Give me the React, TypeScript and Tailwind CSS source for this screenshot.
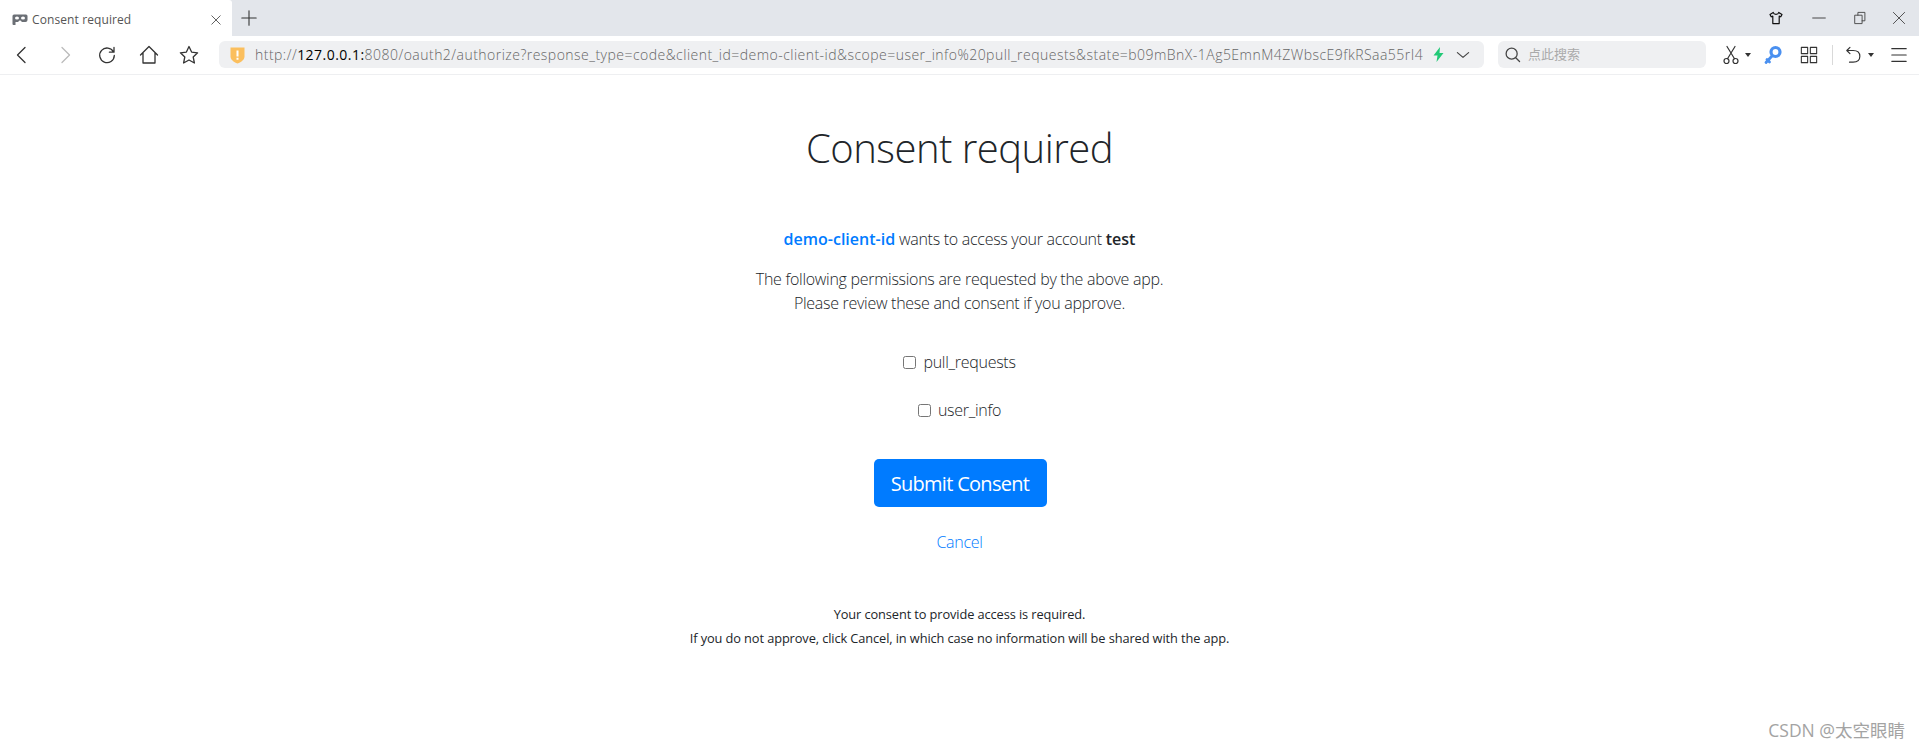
const FONT = "font-['Open_Sans','Noto_Sans_CJK_SC',sans-serif]";

function Icon({ size = 20, stroke = "#333", width = 1.3, children }: { size?: number; stroke?: string; width?: number; children: React.ReactNode }) {
  return (
    <svg width={size} height={size} viewBox="0 0 20 20" fill="none" stroke={stroke} strokeWidth={width} strokeLinecap="round" strokeLinejoin="round">
      {children}
    </svg>
  );
}

function TabBar() {
  return (
    <div className="flex h-[36px] bg-[#e3e6eb]">
      <div className="flex h-[36px] w-[232px] items-center rounded-tr-[3px] bg-white pl-[12px] pr-[10px] pt-[3px]">
        <svg width="16" height="12" viewBox="0 0 16 12" fill="#6b6f75">
          <path d="M2 0.500h12a1.500 1.500 0 0 1 1.500 1.500v4a2 2 0 0 1-2 2H10L8.500 6.500h-1L6 8H3.500v3H1.500a1 1 0 0 1-1-1V2A1.500 1.500 0 0 1 2 0.500z" />
          <ellipse cx="5" cy="4" rx="2" ry="1.500" fill="#fff" />
          <ellipse cx="11" cy="4" rx="2" ry="1.500" fill="#fff" />
        </svg>
        <span className="ml-[4px] flex-1 text-[12px] tracking-[0.1px] text-[#555]">Consent required</span>
        <Icon size={12} stroke="#444" width={1.4}><path d="M3 3l14 14M17 3L3 17" /></Icon>
      </div>
      <div className="ml-[8px] flex items-center">
        <Icon size={18} stroke="#333" width={1.2}><path d="M10 2v16M2 10h16" /></Icon>
      </div>
      <div className="ml-auto flex items-center pr-[13px]">
        <Icon size={16} stroke="#111" width={1.5}><path d="M6.500 3L2.500 5.500l1.500 3 2-.8V17h8V7.700l2 .8 1.500-3-4-2.500c-.5 2-1.500 2.500-3.500 2.500s-3-.5-3.500-2.500z" /></Icon>
        <div className="ml-[28px]"><Icon size={14} stroke="#444" width={1.4}><path d="M1 10h18" /></Icon></div>
        <div className="ml-[27px]"><Icon size={14} stroke="#444" width={1.3}><path d="M3 6h10v12H3zM7 6V2h10v12h-4" /></Icon></div>
        <div className="ml-[25px]"><Icon size={14} stroke="#444" width={1.3}><path d="M2 2l16 16M18 2L2 18" /></Icon></div>
      </div>
    </div>
  );
}

function AddressBar() {
  return (
    <div className="ml-[20px] flex h-[27px] w-[1265px] items-center rounded-[6px] bg-[#eff0f2] pl-[11px] pr-[11px]">
      <svg width="15" height="18" viewBox="0 0 15 18">
        <path d="M0.500 1.500h14v9c0 3-3 5.500-7 7-4-1.500-7-4-7-7z" fill="#fbbf5e" />
        <path d="M6.500 4.500h2v6h-2zM6.500 11.800h2v2h-2z" fill="#fff" />
      </svg>
      <div className="ml-[10px] w-[1168px] overflow-hidden whitespace-nowrap text-[14px] font-light tracking-[0.47px] text-[#666]">
        http://<span className="font-normal text-black">127.0.0.1:</span>8080/oauth2/authorize?response_type=code&amp;client_id=demo-client-id&amp;scope=user_info%20pull_requests&amp;state=b09mBnX-1Ag5EmnM4ZWbscE9fkRSaa55rI4
      </div>
      <svg className="ml-[10px]" width="11" height="15" viewBox="0 0 11 15" fill="#22c977">
        <path d="M7 0L0.500 8.500h4L3.500 15 10.500 6h-4z" />
      </svg>
      <div className="ml-[11px]"><Icon size={16} stroke="#444" width={1.5}><path d="M3 7l7 6 7-6" /></Icon></div>
    </div>
  );
}

function Toolbar() {
  return (
    <div className="flex h-[39px] items-center border-b border-[#eeeff1] bg-white pb-[1px] pl-[12px]">
      <Icon size={20} stroke="#333"><path d="M13 2.500L5.500 10l7.500 7.500" /></Icon>
      <div className="ml-[23px]"><Icon size={20} stroke="#bbb"><path d="M7 2.500L14.500 10 7 17.500" /></Icon></div>
      <div className="ml-[22px]"><Icon size={20} stroke="#333"><path d="M16.500 7a7.300 7.300 0 1 0 .8 3.500M17 2.500V7.200h-4.600" /></Icon></div>
      <div className="ml-[22px]"><Icon size={20} stroke="#333"><path d="M1.500 10L10 1.500 18.500 10M4 8v10h12V8" /></Icon></div>
      <div className="ml-[20px]"><Icon size={20} stroke="#333"><path d="M10 1.500l2.600 5.600 6 .7-4.400 4.200 1.200 6L10 15l-5.400 3 1.200-6L1.400 7.800l6-.7z" /></Icon></div>
      <AddressBar />
      <div className="ml-[14px] flex h-[27px] w-[208px] items-center rounded-[6px] bg-[#eff0f2] pl-[6px]">
        <Icon size={17} stroke="#444" width={1.5}><circle cx="9" cy="9" r="6.500" /><path d="M13.800 13.800l4.500 4.500" /></Icon>
        <span className="ml-[7px] text-[13px] leading-none text-[#aaa]">点此搜索</span>
      </div>
      <div className="ml-[15px] flex items-center">
        <Icon size={20} stroke="#333" width={1.2}><circle cx="5.500" cy="16" r="2.500" /><circle cx="14.500" cy="16" r="2.500" /><path d="M6.500 13.800L14 1.500M13.500 13.800L6 1.500" /></Icon>
        <span className="ml-[4px] h-0 w-0 border-x-[3px] border-t-[4px] border-x-transparent border-t-[#333]" />
      </div>
      <div className="ml-[13px]">
        <svg width="18" height="20" viewBox="0 0 18 20" fill="none">
          <circle cx="11.500" cy="7" r="4.500" stroke="#4a90f0" strokeWidth="3.200" />
          <path d="M8 11L2 17.500M3 14.500l2.500 2.500" stroke="#4a90f0" strokeWidth="2.800" strokeLinecap="round" />
        </svg>
      </div>
      <div className="ml-[18px]">
        <Icon size={18} stroke="#333" width={1.2}><path d="M1.500 1.500h7v7h-7zM11.500 1.500h7v7h-7zM1.500 11.500h7v7h-7zM11.500 11.500h7v7h-7z" /></Icon>
      </div>
      <div className="ml-[14px] h-[20px] w-px bg-[#d9d9d9]" />
      <div className="ml-[12px] flex items-center">
        <Icon size={18} stroke="#333" width={1.3}><path d="M5.500 1.500L2 5l3.500 3.500M2 5h7c5 0 7.500 2.500 7.500 6.500S14 18 9 18H5" /></Icon>
        <span className="ml-[5px] h-0 w-0 border-x-[3px] border-t-[4px] border-x-transparent border-t-[#333]" />
      </div>
      <div className="ml-[16px]">
        <Icon size={18} stroke="#333" width={1.3}><path d="M2 3h16M2 10h16M2 17h16" /></Icon>
      </div>
    </div>
  );
}

function Scope({ id, label }: { id: string; label: string }) {
  return (
    <div className="flex h-[24px] items-center justify-center">
      <input id={id} type="checkbox" className="m-0 h-[13px] w-[13px]" />
      <label htmlFor={id} className="ml-[7px]">{label}</label>
    </div>
  );
}

export default function App() {
  return (
    <div className={`relative h-[749px] overflow-hidden bg-white ${FONT} text-[#212529]`}>
      <TabBar />
      <Toolbar />
      <main className="flex flex-col items-center text-center text-[16px] leading-[24px] font-light tracking-[-0.28px]">
        <h1 className="mt-[49px] text-[40px] leading-[48px] font-light tracking-[-0.5px]">Consent required</h1>
        <p className="mt-[55px]">
          <b className="font-semibold tracking-normal text-[#007bff]">demo-client-id</b> wants to access your account <b className="font-semibold tracking-normal">test</b>
        </p>
        <p className="mt-[16px]">
          The following permissions are requested by the above app.<br />
          Please review these and consent if you approve.
        </p>
        <div className="mt-[35px] flex flex-col gap-[24px]">
          <Scope id="pull_requests" label="pull_requests" />
          <Scope id="user_info" label="user_info" />
        </div>
        <button className="mt-[37px] ml-[1px] h-[48px] w-[173px] rounded-[5px] bg-[#007bff] pt-[2px] text-[20px] font-normal tracking-[-0.7px] text-white">Submit Consent</button>
        <a className="mt-[23px] text-[#007bff]">Cancel</a>
        <p className="mt-[48px] text-[12.8px] font-normal tracking-[-0.1px]">
          Your consent to provide access is required.<br />
          If you do not approve, click Cancel, in which case no information will be shared with the app.
        </p>
      </main>
      <div className="absolute bottom-[6px] right-[14px] text-[17.5px] text-[#a3a3a3]">CSDN @太空眼睛</div>
    </div>
  );
}
